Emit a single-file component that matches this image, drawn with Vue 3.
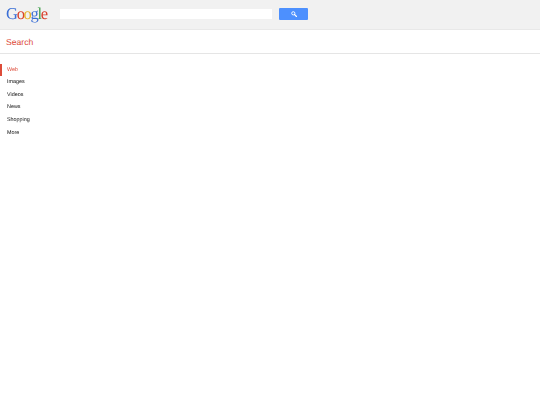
<script setup>
const logo = [
  { c: 'G', color: '#3b6fd6' },
  { c: 'o', color: '#d9432f' },
  { c: 'o', color: '#e8b32c' },
  { c: 'g', color: '#3b6fd6' },
  { c: 'l', color: '#3f9e4a' },
  { c: 'e', color: '#d9432f' }
]
const items = ['Web', 'Images', 'Videos', 'News', 'Shopping', 'More']
</script>

<template>
  <div class="page">
    <header class="top">
      <div class="logo">
        <span v-for="(l, i) in logo" :key="i" :style="{ color: l.color }">{{ l.c }}</span>
      </div>
      <div class="input"></div>
      <button class="btn" aria-label="Search">
        <svg width="6" height="6" viewBox="0 0 12 12">
          <circle cx="4.6" cy="4.6" r="3.2" fill="none" stroke="#fff" stroke-width="1.8" />
          <path d="M7 7l4 4" stroke="#fff" stroke-width="2.2" stroke-linecap="round" />
        </svg>
      </button>
    </header>
    <div class="sub">Search</div>
    <nav class="nav">
      <div v-for="(item, i) in items" :key="item" class="item" :class="{ active: i === 0 }">
        <span class="label">{{ item }}</span>
      </div>
    </nav>
  </div>
</template>

<style>
html, body { margin: 0; background: #fff; }
</style>

<style scoped>
.page {
  width: 540px;
  height: 405px;
  background: #fff;
  font-family: "Liberation Sans", Arial, sans-serif;
  text-rendering: geometricPrecision;
  overflow: hidden;
}
.top {
  box-sizing: border-box;
  height: 30px;
  background: #f1f1f1;
  border-bottom: 1px solid #e8e8e8;
  display: flex;
  align-items: center;
  padding-left: 6px;
  padding-bottom: 1px;
}
.logo {
  width: 54px;
  font-family: "Liberation Serif", serif;
  font-size: 16.5px;
  line-height: 20px;
  letter-spacing: -1.3px;
  white-space: nowrap;
  filter: blur(0.3px);
}
.input {
  width: 212px;
  height: 10px;
  background: #fff;
}
.btn {
  margin-left: 7px;
  width: 29px;
  height: 11.5px;
  padding: 0;
  border: 0;
  border-radius: 1px;
  background: #4d90fe;
  display: flex;
  align-items: center;
  justify-content: center;
}
.sub {
  box-sizing: border-box;
  height: 24px;
  border-bottom: 1px solid #e5e5e5;
  padding-left: 6px;
  font-size: 8.6px;
  line-height: 24px;
  color: #dd4b39;
}
.nav {
  padding-top: 9.6px;
}
.item {
  height: 12.6px;
  line-height: 12.6px;
  padding-left: 7px;
  font-size: 5.4px;
  color: #111;
}
.label {
  display: inline-block;
  filter: blur(0.2px);
}
.item.active {
  color: #dd4b39;
  box-shadow: inset 2px 0 0 #dd4b39;
}
</style>
